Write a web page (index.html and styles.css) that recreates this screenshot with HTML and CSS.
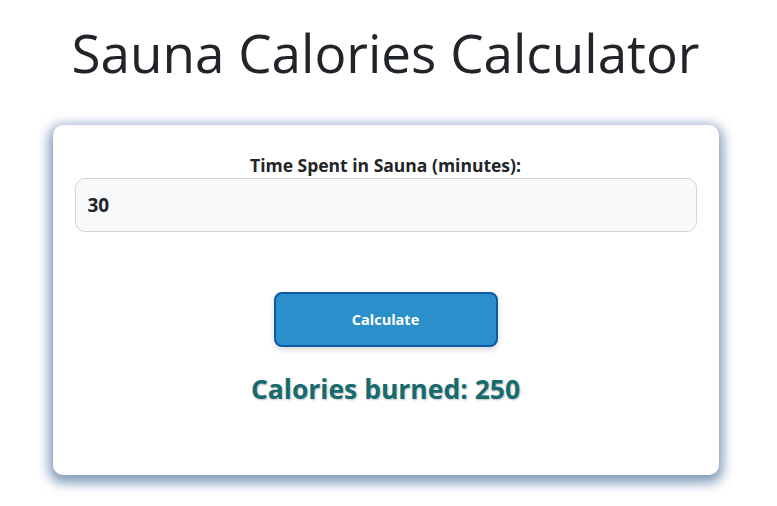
FILE: index.html
```html
<!DOCTYPE html>
<html lang="en">
<head>
    <meta charset="UTF-8">
    <meta name="viewport" content="width=device-width, initial-scale=1.0">
    <title>Sauna Calories Calculator</title>
    <link rel="stylesheet" href="styles.css">
</head>
<body>
    <h1>Sauna Calories Calculator</h1>

    <div class="calculator">
        <div class="form-group">
            <label for="time">Time Spent in Sauna (minutes):</label>
            <input type="number" id="time" value="30">
        </div>

        <button type="button" id="calcBtn">Calculate</button>

        <div class="result" id="result">Calories burned: 250</div>
    </div>
</body>
</html>
```

FILE: styles.css
```css
body {
    font-family: "Open Sans", "Noto Sans", sans-serif;
    margin: 0;
    padding: 0 23px 30px 17px;
    background: #fff;
    color: #212529;
}
h1 {
    font-size: 53px;
    font-weight: 400;
    text-align: center;
    margin: 21px 0 40px;
    line-height: 1.2;
}
.calculator {
    max-width: 622px;
    margin: 0 auto;
    padding: 28px 22px 68px;
    background: #fff;
    border-radius: 10px;
    box-shadow: 0 4px 12px 4px rgba(55, 95, 145, 0.62);
}
.form-group {
    text-align: center;
}
label {
    display: block;
    font-weight: bold;
    font-size: 17.5px;
    margin-bottom: 1px;
}
input {
    box-sizing: border-box;
    width: 100%;
    height: 54px;
    padding: 0 12px;
    font-family: inherit;
    font-size: 19px;
    font-weight: bold;
    color: #212529;
    background: #f8f9fa;
    border: 1px solid #d3d6d9;
    border-radius: 10px;
}
button {
    display: block;
    width: 224px;
    height: 55px;
    margin: 60px auto 0;
    background: #2b8fcb;
    color: #fff;
    border: 2px solid #0d5aa6;
    border-radius: 8px;
    font-family: inherit;
    font-size: 14.5px;
    font-weight: bold;
    box-shadow: 0 3px 6px rgba(0, 0, 0, 0.15);
    cursor: pointer;
}
button:hover {
    background: #2480b8;
}
.result {
    text-align: center;
    margin-top: 24px;
    font-size: 26.5px;
    font-weight: bold;
    color: #166b6e;
    text-shadow: 1px 1px 2px rgba(0, 0, 0, 0.25);
}
```
